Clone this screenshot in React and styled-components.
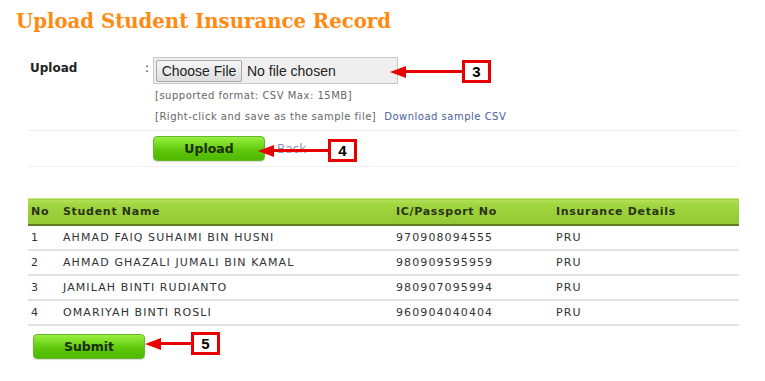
import styled, { createGlobalStyle } from "styled-components";

const GlobalStyle = createGlobalStyle`
  body {
    margin: 0;
    background: #fff;
    font-family: "DejaVu Sans", Verdana, sans-serif;
    color: #333;
  }
`;

const Page = styled.div`
  position: relative;
  width: 765px;
  height: 381px;
  padding: 9px 0 0 0;
  box-sizing: border-box;
`;

const Title = styled.h1`
  margin: 0 0 0 16px;
  font-family: "DejaVu Serif", Georgia, serif;
  font-size: 19.7px;
  line-height: 26px;
  font-weight: bold;
  color: #ff8a12;
`;

const Content = styled.div`
  margin: 0 26px 0 28px;
`;

const FormRow = styled.div`
  display: grid;
  grid-template-columns: 117px 8px 1fr;
  padding-top: ${(p) => p.$top || 0}px;
  border-bottom: 1px solid #f0f0f0;
`;

const Label = styled.div`
  padding: 4px 0 0 2px;
  font-size: 12px;
  font-weight: bold;
  color: #222;
`;

const Colon = styled.div`
  padding-top: 4px;
  font-size: 12px;
  color: #333;
`;

const FileBox = styled.div`
  display: flex;
  align-items: center;
  gap: 5px;
  width: 245px;
  height: 27px;
  box-sizing: border-box;
  padding: 0 2px;
  background: #efefef;
  border: 1px solid #c8c8c8;
  font-family: "Liberation Sans", Arial, sans-serif;
  font-size: 14px;
  color: #222;
`;

const ChooseButton = styled.span`
  display: inline-flex;
  align-items: center;
  justify-content: center;
  width: 86px;
  height: 22px;
  box-sizing: border-box;
  background: linear-gradient(#f6f6f6, #dedede);
  border: 1px solid #a8a8a8;
  border-radius: 2px;
  color: #222;
`;

const Hint = styled.div`
  margin-top: ${(p) => p.$gap || 0}px;
  padding-left: 2px;
  font-size: 10px;
  line-height: 14px;
  letter-spacing: 0.5px;
  color: #666;
  white-space: nowrap;
`;

const Link = styled.a`
  margin-left: ${(p) => p.$gap || 0}px;
  color: ${(p) => p.$color || "#4a5e9c"};
  font-size: ${(p) => p.$size || 10}px;
  text-decoration: none;
`;

const ActionRow = styled.div`
  display: flex;
  align-items: center;
  gap: 12px;
  height: 35px;
  padding-left: 125px;
  border-bottom: 1px solid #f0f0f0;
`;

const GreenButton = styled.button`
  width: 112px;
  height: 25px;
  margin-left: ${(p) => p.$left || 0}px;
  background: linear-gradient(#98f040, #5cc60a 60%, #4fb800);
  border: 1px solid #66b82a;
  border-radius: 4px;
  box-shadow: 0 1px 1px rgba(0, 0, 0, 0.15);
  font-family: "DejaVu Sans", Verdana, sans-serif;
  font-size: 12.5px;
  font-weight: bold;
  color: #1c2e08;
  padding: 0;
`;

const Table = styled.table`
  width: 711px;
  margin-top: 31px;
  border-collapse: collapse;
  table-layout: fixed;
  font-size: 11px;
`;

const Th = styled.th`
  height: 25px;
  padding: 0 0 0 3px;
  text-align: left;
  font-weight: bold;
  letter-spacing: 0.7px;
  color: #2a3318;
  background: linear-gradient(#b4e25c, #a2d640 20%, #92c834);
  border-top: 1px solid #c4e88a;
  border-bottom: 2px solid #5e7a22;
  width: ${(p) => (p.$w ? `${p.$w}px` : "auto")};
`;

const Td = styled.td`
  height: 23px;
  padding: 0 0 0 3px;
  color: #333;
  letter-spacing: 1.1px;
  white-space: nowrap;
  border-bottom: 2px solid #e2e2e2;
`;

const SubmitRow = styled.div`
  padding-top: 8px;
`;

const Callout = styled.div`
  position: absolute;
  left: ${(p) => p.$x}px;
  top: ${(p) => p.$y}px;
  display: flex;
  align-items: center;
`;

const ArrowHead = styled.span`
  width: 0;
  height: 0;
  border-top: 6px solid transparent;
  border-bottom: 6px solid transparent;
  border-right: 16px solid #e80000;
`;

const ArrowLine = styled.span`
  width: ${(p) => p.$len}px;
  height: 3px;
  background: #e80000;
`;

const NumBox = styled.span`
  display: flex;
  align-items: center;
  justify-content: center;
  width: 29px;
  height: 23px;
  box-sizing: border-box;
  border: 3px solid #e80000;
  background: #fff;
  font-family: "Liberation Sans", Arial, sans-serif;
  font-size: 15px;
  font-weight: bold;
  color: #000;
`;

const students = [
  { no: 1, name: "AHMAD FAIQ SUHAIMI BIN HUSNI", ic: "970908094555", ins: "PRU" },
  { no: 2, name: "AHMAD GHAZALI JUMALI BIN KAMAL", ic: "980909595959", ins: "PRU" },
  { no: 3, name: "JAMILAH BINTI RUDIANTO", ic: "980907095994", ins: "PRU" },
  { no: 4, name: "OMARIYAH BINTI ROSLI", ic: "960904040404", ins: "PRU" },
];

const Pointer = ({ x, y, len, num }) => (
  <Callout $x={x} $y={y}>
    <ArrowHead />
    <ArrowLine $len={len} />
    <NumBox>{num}</NumBox>
  </Callout>
);

const App = () => {
  return (
    <Page>
      <GlobalStyle />
      <Title>Upload Student Insurance Record</Title>
      <Content>
        <FormRow $top={22}>
          <Label>Upload</Label>
          <Colon>:</Colon>
          <div>
            <FileBox>
              <ChooseButton>Choose File</ChooseButton>
              No file chosen
            </FileBox>
            <Hint $gap={5}>[supported format: CSV Max: 15MB]</Hint>
            <Hint $gap={7}>
              [Right-click and save as the sample file]
              <Link href="#" $gap={8}>Download sample CSV</Link>
            </Hint>
            <div style={{ height: 6 }} />
          </div>
        </FormRow>
        <ActionRow>
          <GreenButton>Upload</GreenButton>
          <Link href="#" $color="#8a96b8" $size={12}>Back</Link>
        </ActionRow>
        <Table>
          <thead>
            <tr>
              <Th $w={29}>No</Th>
              <Th $w={330}>Student Name</Th>
              <Th $w={157}>IC/Passport No</Th>
              <Th>Insurance Details</Th>
            </tr>
          </thead>
          <tbody>
            {students.map((s) => (
              <tr key={s.no}>
                <Td>{s.no}</Td>
                <Td>{s.name}</Td>
                <Td>{s.ic}</Td>
                <Td>{s.ins}</Td>
              </tr>
            ))}
          </tbody>
        </Table>
        <SubmitRow>
          <GreenButton $left={5}>Submit</GreenButton>
        </SubmitRow>
      </Content>
      <Pointer x={390} y={60} len={56} num="3" />
      <Pointer x={258} y={139} len={54} num="4" />
      <Pointer x={145} y={332} len={30} num="5" />
    </Page>
  );
};

export default App;
